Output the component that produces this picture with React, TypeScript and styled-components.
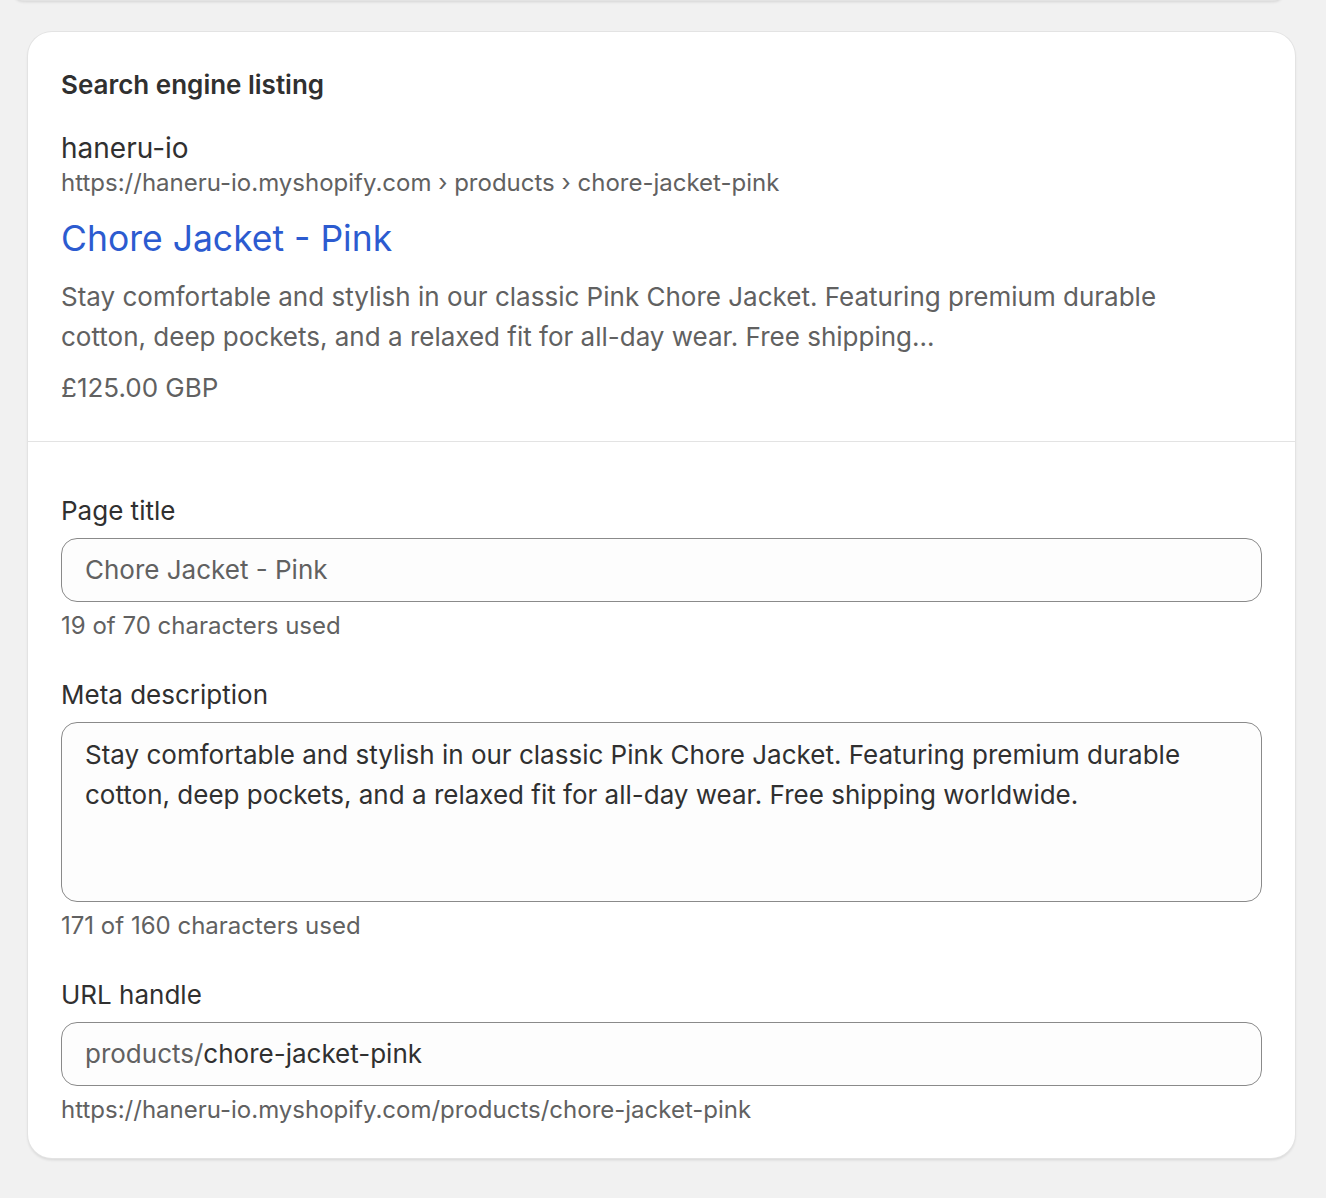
import React from "react";
import styled, { createGlobalStyle } from "styled-components";

const GlobalStyle = createGlobalStyle`
  html, body {
    margin: 0;
    padding: 0;
    background: #f1f1f1;
    font-family: Inter, "Noto Sans", sans-serif;
    color: #303030;
    -webkit-font-smoothing: antialiased;
  }
`;

const Page = styled.div`
  display: flex;
  flex-direction: column;
  gap: 32px;
  padding: 0 31px 40px 28px;
  overflow: hidden;
`;

const Card = styled.section`
  background: #ffffff;
  border-radius: 24px;
  box-shadow: 0 0 0 1px #e3e3e3, 0 2px 3px rgba(0, 0, 0, 0.12);
  overflow: hidden;
`;

const PrevCard = styled(Card)`
  height: 24px;
  margin: -24px 10px 0 -16px;
`;

const Preview = styled.div`
  display: flex;
  flex-direction: column;
  padding: 33px 33px 33px;
`;

const Fields = styled.div`
  display: flex;
  flex-direction: column;
  gap: 32px;
  padding: 49px 33px 31px;
  border-top: 1px solid #e3e3e3;
`;

const Heading = styled.h2`
  margin: 0 0 25px;
  font-size: 26px;
  line-height: 40px;
  font-weight: 600;
  color: #303030;
`;

const StoreName = styled.div`
  font-size: 28px;
  line-height: 36px;
  color: #303030;
`;

const Crumbs = styled.div`
  font-size: 24px;
  line-height: 34px;
  color: #616161;
`;

const ResultTitle = styled.div`
  margin-top: 15px;
  font-size: 35.5px;
  line-height: 48px;
  color: #2c5bd0;
`;

const Snippet = styled.p`
  margin: 14px 0 0;
  font-size: 26px;
  line-height: 40px;
  color: #616161;
  max-width: 1120px;
`;

const Price = styled.div`
  margin-top: 11px;
  font-size: 26px;
  line-height: 40px;
  color: #616161;
`;

const Field = styled.div`
  display: flex;
  flex-direction: column;
`;

const Label = styled.label`
  font-size: 26px;
  line-height: 40px;
  color: #303030;
  margin-bottom: 7px;
`;

const Box = styled.div<{ $tall?: boolean }>`
  box-sizing: border-box;
  height: ${(p) => (p.$tall ? "180px" : "64px")};
  border: 1px solid #8a8a8a;
  border-radius: 16px;
  background: #fdfdfd;
  padding: ${(p) => (p.$tall ? "12px 23px" : "0 23px")};
  display: flex;
  align-items: ${(p) => (p.$tall ? "flex-start" : "center")};
  font-size: 26px;
  line-height: 40px;
`;

const Muted = styled.span`
  color: #616161;
`;

const Value = styled.span`
  color: #303030;
`;

const Help = styled.div`
  margin-top: 7px;
  font-size: 24px;
  line-height: 34px;
  color: #616161;
`;

export default function App() {
  return (
    <>
      <GlobalStyle />
      <Page>
        <PrevCard />
        <Card>
          <Preview>
            <Heading>Search engine listing</Heading>
            <StoreName>haneru-io</StoreName>
            <Crumbs>https://haneru-io.myshopify.com › products › chore-jacket-pink</Crumbs>
            <ResultTitle>Chore Jacket - Pink</ResultTitle>
            <Snippet>
              Stay comfortable and stylish in our classic Pink Chore Jacket. Featuring premium durable
              cotton, deep pockets, and a relaxed fit for all-day wear. Free shipping...
            </Snippet>
            <Price>£125.00 GBP</Price>
          </Preview>
          <Fields>
            <Field>
              <Label>Page title</Label>
              <Box>
                <Muted>Chore Jacket - Pink</Muted>
              </Box>
              <Help>19 of 70 characters used</Help>
            </Field>
            <Field>
              <Label>Meta description</Label>
              <Box $tall>
                <Value>
                  Stay comfortable and stylish in our classic Pink Chore Jacket. Featuring premium durable
                  cotton, deep pockets, and a relaxed fit for all-day wear. Free shipping worldwide.
                </Value>
              </Box>
              <Help>171 of 160 characters used</Help>
            </Field>
            <Field>
              <Label>URL handle</Label>
              <Box>
                <Muted>products/</Muted>
                <Value>chore-jacket-pink</Value>
              </Box>
              <Help>https://haneru-io.myshopify.com/products/chore-jacket-pink</Help>
            </Field>
          </Fields>
        </Card>
      </Page>
    </>
  );
}
